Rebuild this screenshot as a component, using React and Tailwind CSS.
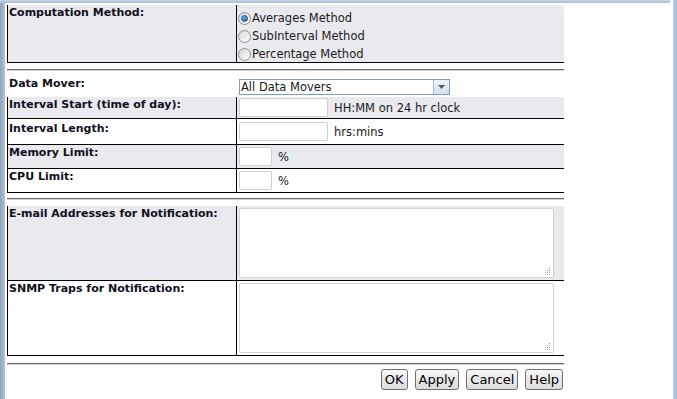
import React from "react";

const labelCls = "font-bold text-[11px] leading-[13px] text-[#10101c]";
const textCls = "text-[11.5px] leading-[14px] text-[#1a1a1a]";

function Radio({ checked, label }) {
  return (
    <div className="flex items-center h-[18px]">
      <span className="w-[13px] h-[13px] rounded-full border border-[#8f8f8f] bg-gradient-to-br from-[#d9d9d9] to-[#fbfbfb] flex items-center justify-center">
        {checked && (
          <span className="w-[7px] h-[7px] rounded-full bg-gradient-to-br from-[#7cc4f5] to-[#1b5e9e] border border-[#1d4f80]"></span>
        )}
      </span>
      <span className={textCls + " ml-[1px]"}>{label}</span>
    </div>
  );
}

function Field({ w }) {
  return (
    <input
      type="text"
      className={`${w} h-[19px] border border-[#cfcfcf] rounded-[2px] bg-white outline-none`}
    />
  );
}

function Grip() {
  return (
    <svg className="absolute right-[3px] bottom-[3px]" width="7" height="7" viewBox="0 0 7 7">
      <rect x="5" y="0" width="1" height="1" fill="#9a9a9a" />
      <rect x="3" y="2" width="1" height="1" fill="#9a9a9a" />
      <rect x="5" y="2" width="1" height="1" fill="#9a9a9a" />
      <rect x="1" y="4" width="1" height="1" fill="#9a9a9a" />
      <rect x="3" y="4" width="1" height="1" fill="#9a9a9a" />
      <rect x="5" y="4" width="1" height="1" fill="#9a9a9a" />
      <rect x="1" y="6" width="1" height="1" fill="#b0b0b0" />
      <rect x="3" y="6" width="1" height="1" fill="#b0b0b0" />
      <rect x="5" y="6" width="1" height="1" fill="#b0b0b0" />
    </svg>
  );
}

function Area() {
  return (
    <div className="relative w-[315px] h-[70px]">
      <textarea className="w-full h-full border border-[#d2d2d2] rounded-[2px] bg-white resize-none outline-none" />
      <Grip />
    </div>
  );
}

function Hr() {
  return <div className="w-[557px] h-[2px] border-t border-[#6a6a6a] border-b border-b-[#d3d3d3]"></div>;
}

function Btn({ children }) {
  return (
    <button className="h-[21px] px-[3px] border border-[#707070] rounded-[3px] bg-gradient-to-b from-[#f7f7f7] to-[#dcdcdc] text-[13px] leading-[17px] text-black">
      {children}
    </button>
  );
}

export default function App() {
  return (
    <div className="w-[677px] h-[399px] overflow-hidden flex bg-white" style={{ fontFamily: '"DejaVu Sans", Verdana, sans-serif' }}>
      <div className="w-[673px] flex flex-col">
        {/* window top edge */}
        <div className="h-[3px] w-[670px] bg-gradient-to-b from-[#c9d6e6] to-[#a9bcd3]"></div>
        <div className="flex flex-1">
          <div className="w-[5px] bg-gradient-to-r from-[#8fa3bf] to-[#b3c2d6]"></div>

          <div className="pl-[2px] pt-[2px]">
            {/* Computation method */}
            <div className="w-[557px] flex bg-[#e9eaee] border-l border-b border-black">
              <div className={labelCls + " w-[229px] border-r border-black pl-[1px] pt-[1px]"}>Computation Method:</div>
              <div className="flex-1 pl-[1px] pt-[4px] pb-[0px] h-[57px]">
                <Radio checked label="Averages Method" />
                <Radio label="SubInterval Method" />
                <Radio label="Percentage Method" />
              </div>
            </div>

            <div className="mt-[6px]"><Hr /></div>

            {/* Data mover */}
            <div className="w-[557px] h-[26px] flex border-l border-transparent">
              <div className={labelCls + " w-[229px] pl-[1px] pt-[6px]"}>Data Mover:</div>
              <div className="flex-1 pl-[2px] pt-[8px]">
                <div className="w-[211px] h-[16px] flex border border-[#7f9db9] bg-white">
                  <div className={textCls + " flex-1 pl-[1px] leading-[14px]"}>All Data Movers</div>
                  <div className="w-[16px] h-full border-l border-[#a7bcd6] bg-gradient-to-b from-[#eef3fa] to-[#d2dff0] flex items-center justify-center">
                    <svg width="7" height="4" viewBox="0 0 7 4"><path d="M0 0h7L3.5 4z" fill="#5a5a5a" /></svg>
                  </div>
                </div>
              </div>
            </div>

            {/* Interval / limits */}
            <div className="w-[557px] border-l border-black">
              <div className="h-[22px] flex bg-[#e9eaee] border-b border-black">
                <div className={labelCls + " w-[229px] border-r border-black pl-[1px] pt-[1px]"}>Interval Start (time of day):</div>
                <div className="flex-1 pl-[2px] flex items-center">
                  <Field w="w-[89px]" />
                  <span className={textCls + " ml-[6px]"}>HH:MM on 24 hr clock</span>
                </div>
              </div>
              <div className="h-[26px] flex border-b border-black">
                <div className={labelCls + " w-[229px] border-r border-black pl-[1px] pt-[3px]"}>Interval Length:</div>
                <div className="flex-1 pl-[2px] flex items-center">
                  <Field w="w-[89px]" />
                  <span className={textCls + " ml-[6px]"}>hrs:mins</span>
                </div>
              </div>
              <div className="h-[24px] flex bg-[#e9eaee] border-b border-black">
                <div className={labelCls + " w-[229px] border-r border-black pl-[1px] pt-[1px]"}>Memory Limit:</div>
                <div className="flex-1 pl-[2px] flex items-center">
                  <Field w="w-[33px]" />
                  <span className={textCls + " ml-[6px]"}>%</span>
                </div>
              </div>
              <div className="h-[24px] flex border-b border-black">
                <div className={labelCls + " w-[229px] border-r border-black pl-[1px] pt-[1px]"}>CPU Limit:</div>
                <div className="flex-1 pl-[2px] flex items-center">
                  <Field w="w-[33px]" />
                  <span className={textCls + " ml-[6px]"}>%</span>
                </div>
              </div>
            </div>

            <div className="mt-[5px]"><Hr /></div>

            {/* Notification */}
            <div className="mt-[6px] w-[557px] border-l border-black">
              <div className="h-[75px] flex bg-[#e9eaee] border-b border-black">
                <div className={labelCls + " w-[229px] border-r border-black pl-[1px] pt-[1px]"}>E-mail Addresses for Notification:</div>
                <div className="flex-1 pl-[2px] pt-[2px]">
                  <Area />
                </div>
              </div>
              <div className="h-[75px] flex border-b border-black">
                <div className={labelCls + " w-[229px] border-r border-black pl-[1px] pt-[1px]"}>SNMP Traps for Notification:</div>
                <div className="flex-1 pl-[2px] pt-[2px]">
                  <Area />
                </div>
              </div>
            </div>

            <div className="mt-[7px]"><Hr /></div>

            <div className="w-[557px] mt-[4px] pr-[1px] flex justify-end gap-[7px]">
              <Btn>OK</Btn>
              <Btn>Apply</Btn>
              <Btn>Cancel</Btn>
              <Btn>Help</Btn>
            </div>
          </div>
        </div>
      </div>
      <div className="w-[4px] h-full bg-gradient-to-r from-[#b9cfea] to-[#9fbbe0]"></div>
    </div>
  );
}
